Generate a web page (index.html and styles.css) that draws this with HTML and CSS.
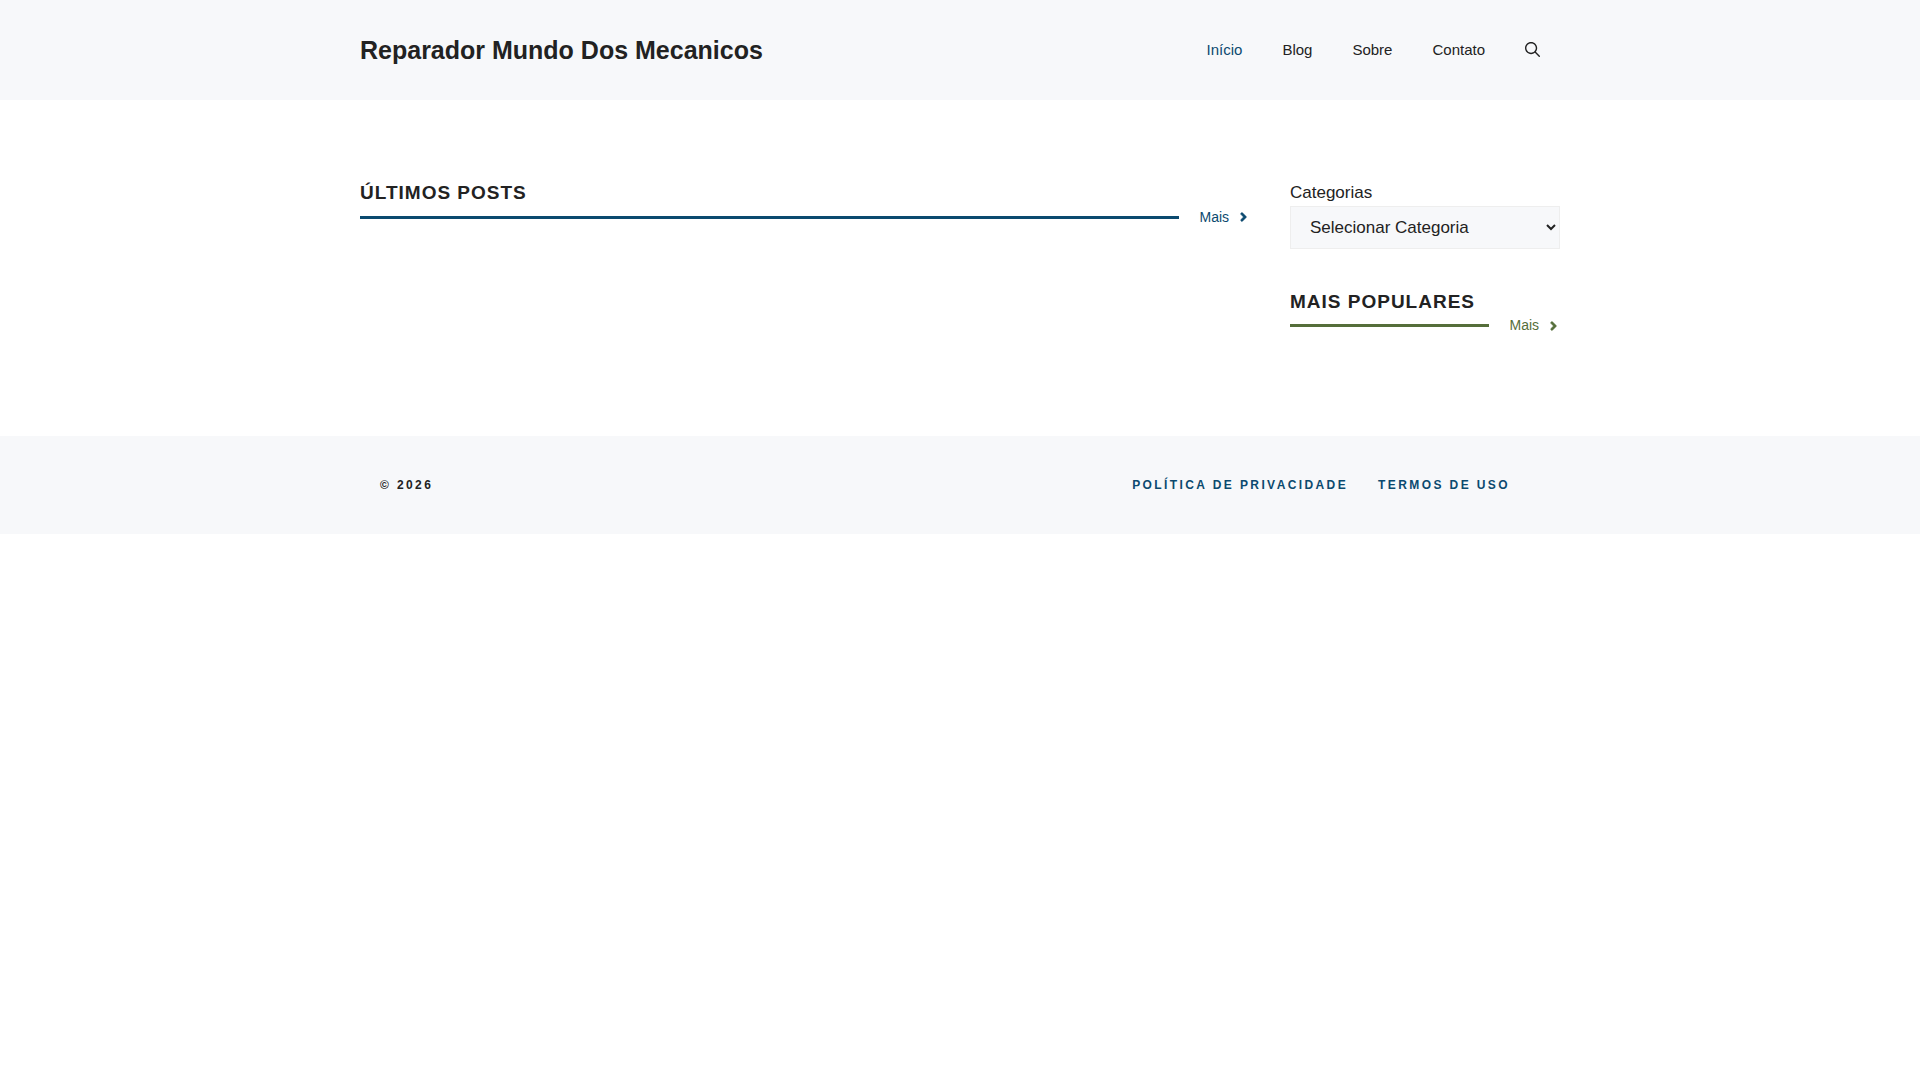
FILE: index.html
```html
<!DOCTYPE html>
<html lang="pt-BR">
<head>
<meta charset="utf-8">
<title>Reparador Mundo Dos Mecanicos</title>
<link rel="stylesheet" href="styles.css">
</head>
<body>
<header class="site-header">
  <div class="header-inner">
    <a class="site-title" href="#">Reparador Mundo Dos Mecanicos</a>
    <nav class="main-nav">
      <a class="current" href="#">Início</a>
      <a href="#">Blog</a>
      <a href="#">Sobre</a>
      <a href="#">Contato</a>
      <a class="search" href="#" aria-label="Pesquisar"><svg viewBox="0 0 512 512" width="15" height="15"><path fill="currentColor" fill-rule="evenodd" clip-rule="evenodd" d="M208 48c-88.366 0-160 71.634-160 160s71.634 160 160 160 160-71.634 160-160S296.366 48 208 48zM0 208C0 93.125 93.125 0 208 0s208 93.125 208 208c0 48.741-16.765 93.566-44.843 129.024l133.826 134.018c9.366 9.379 9.355 24.575-.025 33.941-9.379 9.366-24.575 9.355-33.941-.025L337.238 370.987C301.747 399.167 256.839 416 208 416 93.125 416 0 322.875 0 208z"/></svg></a>
    </nav>
  </div>
</header>
<div class="content">
  <main class="posts">
    <h2>Últimos posts</h2>
    <div class="rule-row blue">
      <span class="rule"></span>
      <a class="more" href="#">Mais <svg viewBox="0 0 256 512" width="7" height="14"><path fill="currentColor" stroke="currentColor" stroke-width="22" d="M224.3 273l-136 136c-9.4 9.400-24.600 9.400-33.900 0l-22.600-22.600c-9.400-9.400-9.400-24.600 0-33.900l96.400-96.400-96.400-96.400c-9.400-9.400-9.400-24.600 0-33.900L54.300 103c9.400-9.400 24.600-9.400 33.900 0l136 136c9.500 9.400 9.500 24.600.1 34z"/></svg></a>
    </div>
  </main>
  <aside class="sidebar">
    <label for="categories">Categorias</label>
    <select id="categories"><option>Selecionar Categoria</option></select>
    <h2>Mais populares</h2>
    <div class="rule-row green">
      <span class="rule"></span>
      <a class="more" href="#">Mais <svg viewBox="0 0 256 512" width="7" height="14"><path fill="currentColor" stroke="currentColor" stroke-width="22" d="M224.3 273l-136 136c-9.4 9.400-24.600 9.400-33.900 0l-22.600-22.600c-9.400-9.400-9.400-24.600 0-33.900l96.400-96.400-96.400-96.400c-9.400-9.400-9.400-24.600 0-33.900L54.300 103c9.400-9.400 24.600-9.400 33.900 0l136 136c9.500 9.400 9.500 24.600.1 34z"/></svg></a>
    </div>
  </aside>
</div>
<footer class="site-footer">
  <div class="footer-inner">
    <span>© 2026</span>
    <nav class="footer-nav">
      <a href="#">Política de privacidade</a>
      <a href="#">Termos de uso</a>
    </nav>
  </div>
</footer>
</body>
</html>
```
FILE: styles.css
```css
* { box-sizing: border-box; }
body { margin: 0; background: #fff; color: #222; font: 17px/1.5 "Liberation Sans", Arial, sans-serif; }
a { color: inherit; text-decoration: none; }
h2 { margin: 0; font-size: 19px; line-height: 23px; letter-spacing: 1px; text-transform: uppercase; }
.site-header { background: #f7f8fa; }
.header-inner { display: flex; align-items: center; justify-content: space-between; width: 1200px; height: 100px; margin: 0 auto; }
.site-title { padding-top: 2px; font-size: 25px; font-weight: bold; }
.main-nav { display: flex; align-items: center; font-size: 15px; line-height: 60px; }
.main-nav a { padding: 0 20px; }
.main-nav .current { color: #0b4a6f; }
.main-nav .search { display: flex; align-items: center; padding-bottom: 1px; }
.content { display: grid; grid-template-columns: 890px 270px; column-gap: 40px; width: 1200px; height: 336px; margin: 0 auto; padding-top: 80px; }
.posts { padding-top: 1px; }
.rule-row { display: flex; align-items: center; height: 25px; }
.rule { flex: 1; height: 3px; background: currentColor; }
.more { display: flex; align-items: center; gap: 10.5px; margin-left: 20.4px; padding-right: 3.4px; font-size: 14px; }
.blue { margin-top: 1px; color: #0b4a6f; }
.blue svg { margin-bottom: 1px; }
.green { color: #556e3a; }
.sidebar label { display: block; height: 26px; line-height: 25px; }
.sidebar select { display: block; width: 270px; height: 43px; margin-bottom: 41px; padding: 10px 15px; border: 1px solid #eee; border-radius: 0; background: #f7f8fa; color: #222; font: inherit; line-height: normal; }
.site-footer { background: #f7f8fa; }
.footer-inner { display: flex; align-items: center; justify-content: space-between; width: 1200px; height: 98px; margin: 0 auto; padding: 0 50px 0 20px; font-size: 12px; font-weight: bold; letter-spacing: 2.4px; text-transform: uppercase; }
.footer-nav { display: flex; gap: 30px; color: #0b4a6f; }
```
